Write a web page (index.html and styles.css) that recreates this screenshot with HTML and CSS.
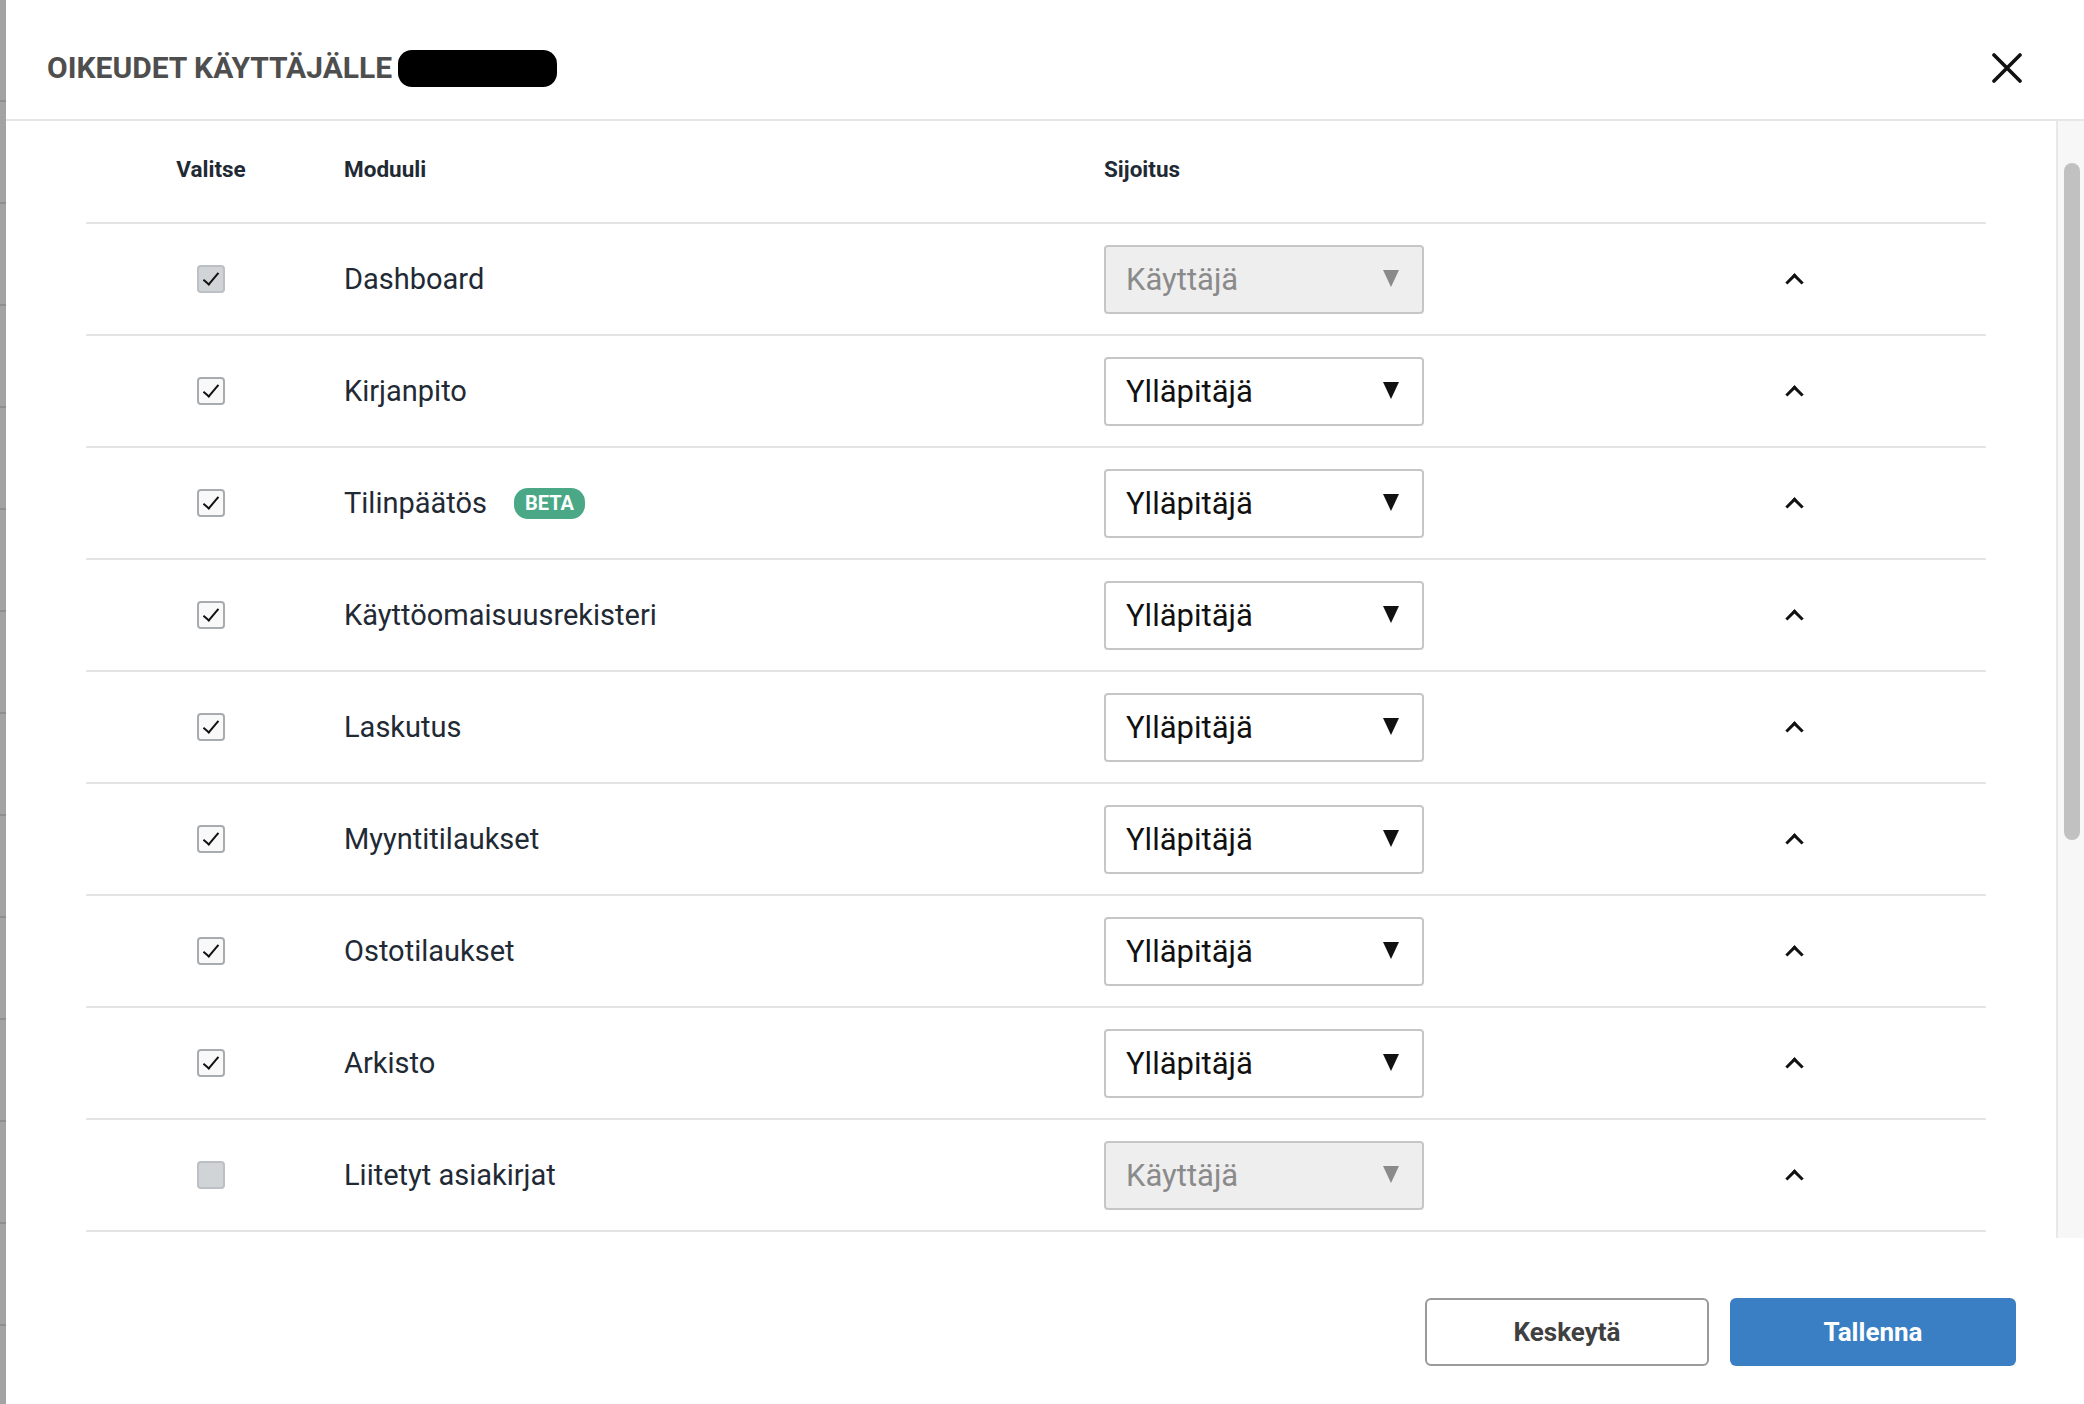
FILE: index.html
```html
<!DOCTYPE html>
<html lang="fi">
<head>
<meta charset="UTF-8" />
<title>Oikeudet käyttäjälle</title>
<link rel="stylesheet" href="styles.css">
</head>
<body>

<div class="backdrop"></div>

<div class="modal">
  <header class="modal-head">
    <h1>OIKEUDET KÄYTTÄJÄLLE <span class="redacted"></span></h1>
    <button class="close" aria-label="Sulje">
      <svg width="30" height="30" viewBox="0 0 30 30"><path d="M2 2 L28 28 M28 2 L2 28" stroke="#111" stroke-width="3.6" stroke-linecap="round"/></svg>
    </button>
  </header>

  <div class="modal-body">
    <div class="table-wrap">
      <div class="row thead">
        <div class="col-check">Valitse</div>
        <div class="col-name">Moduuli</div>
        <div class="col-role">Sijoitus</div>
        <div class="col-toggle"></div>
      </div>

      <div class="row">
        <div class="col-check"><span class="cb checked disabled"></span></div>
        <div class="col-name">Dashboard</div>
        <div class="col-role"><div class="select disabled"><span>Käyttäjä</span><i class="arrow"></i></div></div>
        <div class="col-toggle"><i class="chev"></i></div>
      </div>
      <div class="row">
        <div class="col-check"><span class="cb checked"></span></div>
        <div class="col-name">Kirjanpito</div>
        <div class="col-role"><div class="select"><span>Ylläpitäjä</span><i class="arrow"></i></div></div>
        <div class="col-toggle"><i class="chev"></i></div>
      </div>
      <div class="row">
        <div class="col-check"><span class="cb checked"></span></div>
        <div class="col-name">Tilinpäätös <span class="badge">BETA</span></div>
        <div class="col-role"><div class="select"><span>Ylläpitäjä</span><i class="arrow"></i></div></div>
        <div class="col-toggle"><i class="chev"></i></div>
      </div>
      <div class="row">
        <div class="col-check"><span class="cb checked"></span></div>
        <div class="col-name">Käyttöomaisuusrekisteri</div>
        <div class="col-role"><div class="select"><span>Ylläpitäjä</span><i class="arrow"></i></div></div>
        <div class="col-toggle"><i class="chev"></i></div>
      </div>
      <div class="row">
        <div class="col-check"><span class="cb checked"></span></div>
        <div class="col-name">Laskutus</div>
        <div class="col-role"><div class="select"><span>Ylläpitäjä</span><i class="arrow"></i></div></div>
        <div class="col-toggle"><i class="chev"></i></div>
      </div>
      <div class="row">
        <div class="col-check"><span class="cb checked"></span></div>
        <div class="col-name">Myyntitilaukset</div>
        <div class="col-role"><div class="select"><span>Ylläpitäjä</span><i class="arrow"></i></div></div>
        <div class="col-toggle"><i class="chev"></i></div>
      </div>
      <div class="row">
        <div class="col-check"><span class="cb checked"></span></div>
        <div class="col-name">Ostotilaukset</div>
        <div class="col-role"><div class="select"><span>Ylläpitäjä</span><i class="arrow"></i></div></div>
        <div class="col-toggle"><i class="chev"></i></div>
      </div>
      <div class="row">
        <div class="col-check"><span class="cb checked"></span></div>
        <div class="col-name">Arkisto</div>
        <div class="col-role"><div class="select"><span>Ylläpitäjä</span><i class="arrow"></i></div></div>
        <div class="col-toggle"><i class="chev"></i></div>
      </div>
      <div class="row">
        <div class="col-check"><span class="cb disabled"></span></div>
        <div class="col-name">Liitetyt asiakirjat</div>
        <div class="col-role"><div class="select disabled"><span>Käyttäjä</span><i class="arrow"></i></div></div>
        <div class="col-toggle"><i class="chev"></i></div>
      </div>
    </div>
    <div class="scrollbar"><div class="thumb"></div></div>
  </div>

  <footer class="modal-foot">
    <button class="btn btn-ghost">Keskeytä</button>
    <button class="btn btn-primary">Tallenna</button>
  </footer>
</div>

</body>
</html>
```

FILE: styles.css
```css
html, body {
  height: 100%;
}
body {
  margin: 0;
  display: flex;
  overflow: hidden;
  font-family: Roboto, "Liberation Sans", sans-serif;
  color: #1f2a35;
  background: #9f9f9f;
}
.backdrop {
  width: 6px;
  flex: none;
  background: repeating-linear-gradient(to bottom, #a3a3a3 0, #a3a3a3 100px, #8f8f8f 100px, #8f8f8f 102px);
}
.modal {
  flex: 1;
  display: flex;
  flex-direction: column;
  background: #fff;
  height: 1404px;
}
.modal-head {
  height: 103px;
  border-bottom: 2px solid #e6e6e6;
  display: flex;
  align-items: center;
  justify-content: space-between;
  padding: 16px 62px 0 41px;
}
.modal-head h1 {
  margin: 0;
  font-size: 30px;
  font-weight: 700;
  color: #4e4e4e;
  display: flex;
  align-items: center;
  gap: 6px;
}
.redacted {
  display: inline-block;
  width: 159px;
  height: 37px;
  background: #000;
  border-radius: 14px;
  margin-top: 2px;
}
.close {
  border: 0;
  background: none;
  padding: 0;
  width: 30px;
  height: 30px;
  cursor: pointer;
}
.modal-body {
  height: 1117px;
  display: flex;
}
.table-wrap {
  flex: 1;
  overflow: hidden;
  padding: 0 70px 0 80px;
}
.scrollbar {
  width: 28px;
  border-left: 2px solid #e8e8e8;
  background: #f7f7f7;
  padding: 42px 4px 0 6px;
  box-sizing: border-box;
}
.thumb {
  height: 677px;
  border-radius: 8px;
  background: #c1c1c1;
}
.row {
  display: grid;
  grid-template-columns: 250px 768px 320px 1fr;
  align-items: center;
  height: 110px;
  border-bottom: 2px solid #e4e4e4;
  font-size: 29px;
}
.row.thead {
  height: 96px;
  padding-bottom: 5px;
  font-size: 22.5px;
  font-weight: 700;
}
.col-check {
  display: flex;
  justify-content: center;
}
.col-name {
  padding-left: 8px;
  display: flex;
  align-items: center;
}
.cb {
  width: 24px;
  height: 24px;
  border: 2px solid #a8acb0;
  border-radius: 4px;
  background: #f9f9f9;
  position: relative;
}
.cb.disabled {
  background: #d1d4d7;
  border-color: #bcc0c4;
}
.cb.checked::after {
  content: "";
  position: absolute;
  left: 8px;
  top: 2px;
  width: 6px;
  height: 14px;
  border: solid #111;
  border-width: 0 2px 2px 0;
  transform: rotate(40deg);
}
.badge {
  display: inline-block;
  margin-left: 27px;
  background: #4aa887;
  color: #fff;
  font-size: 20px;
  font-weight: 700;
  line-height: 31px;
  padding: 0 11px;
  border-radius: 14px;
}
.select {
  height: 65px;
  border: 2px solid #c4c6c8;
  border-radius: 4px;
  display: flex;
  align-items: center;
  justify-content: space-between;
  padding: 0 23px 0 20px;
  font-size: 31px;
  color: #111;
  background: #fff;
}
.select.disabled {
  background: #eeeeee;
  color: #8a8a8a;
}
.arrow {
  width: 0;
  height: 0;
  border-left: 8px solid transparent;
  border-right: 8px solid transparent;
  border-top: 17px solid #111;
  margin-top: -2px;
}
.select.disabled .arrow {
  border-top-color: #8a8a8a;
}
.col-toggle {
  padding-left: 364px;
}
.chev {
  display: block;
  width: 10px;
  height: 10px;
  border: solid #111;
  border-width: 3px 0 0 3px;
  transform: rotate(45deg);
  margin-top: 6px;
}
.modal-foot {
  flex: 1;
  display: flex;
  justify-content: flex-end;
  align-items: flex-start;
  gap: 21px;
  padding: 60px 68px 0 0;
}
.btn {
  width: 286px;
  height: 68px;
  border-radius: 6px;
  font-family: Roboto, "Liberation Sans", sans-serif;
  font-size: 26px;
  font-weight: 700;
  cursor: pointer;
}
.btn-ghost {
  width: 284px;
  background: #fff;
  border: 2px solid #9a9a9a;
  color: #404040;
}
.btn-primary {
  background: #3a7fc4;
  border: 0;
  color: #fff;
}
```
